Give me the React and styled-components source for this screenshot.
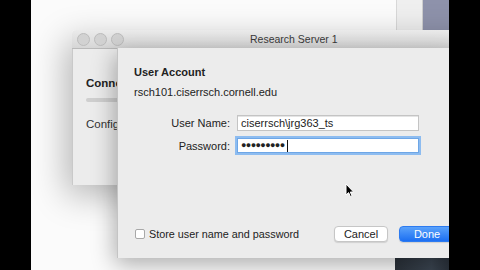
import React from "react";
import styled, { createGlobalStyle } from "styled-components";

const Global = createGlobalStyle`
  html, body { margin: 0; padding: 0; background: #000; }
  body { font-family: "Liberation Sans", Arial, sans-serif; color: #222; }
  #root { width: 480px; height: 270px; overflow: hidden; }
`;

const Screen = styled.div`
  display: flex;
  width: 480px;
  height: 270px;
  background: #000;
`;

const Bar = styled.div`
  width: ${(p) => p.$w}px;
  flex: none;
  background: #000;
`;

const Desktop = styled.div`
  position: relative;
  width: 418px;
  height: 270px;
  overflow: hidden;
  background: #fbfbfb;
`;

const BgWindow = styled.div`
  position: absolute;
  left: 365px;
  top: 0;
  width: 60px;
  height: 270px;
  display: flex;
  flex-direction: column;
  justify-content: space-between;
`;

const BgTop = styled.div`
  display: flex;
  height: 30px;
`;

const BgPane = styled.div`
  width: ${(p) => p.$w}px;
  background: ${(p) => p.$bg};
  border-left: 1px solid ${(p) => p.$line};
`;

const BgBottom = styled.div`
  height: 14px;
  margin-left: -1px;
  background: linear-gradient(90deg, #2b323a, #3a4450 60%, #222830);
`;

const Window = styled.div`
  position: absolute;
  left: 41px;
  top: 30px;
  width: 420px;
  display: flex;
  flex-direction: column;
  box-shadow: -6px 10px 34px rgba(0, 0, 0, 0.28);
  border-radius: 4px 4px 0 0;
`;

const TitleBar = styled.div`
  position: relative;
  height: 18px;
  display: flex;
  align-items: center;
  padding-left: 5px;
  gap: 4px;
  background: linear-gradient(#ebebeb, #d6d6d6);
  border-bottom: 1px solid #b9b9b9;
  border-radius: 4px 4px 0 0;
`;

const Light = styled.span`
  width: 11px;
  height: 11px;
  border-radius: 50%;
  background: #d2d2d2;
  border: 0.5px solid #bcbcbc;
  flex: none;
`;

const Title = styled.div`
  position: absolute;
  left: 178px;
  top: 0;
  height: 18px;
  line-height: 18px;
  font-size: 10.5px;
  color: #3a3a3a;
  white-space: nowrap;
`;

const WinBody = styled.div`
  height: 109px;
  background: #ececec;
  border-left: 1px solid #c9c9c9;
  padding: 27px 0 0 13px;
  display: flex;
  flex-direction: column;
`;

const PaneHead = styled.div`
  font-size: 11.5px;
  font-weight: bold;
  line-height: 14px;
  color: #222;
`;

const Progress = styled.div`
  margin-top: 8px;
  height: 4px;
  width: 80px;
  border-radius: 2px;
  background: #cfcfcf;
`;

const PaneText = styled.div`
  margin-top: 15px;
  font-size: 11.5px;
  line-height: 14px;
  color: #333;
`;

const Sheet = styled.div`
  position: absolute;
  left: 86px;
  top: 48px;
  width: 340px;
  height: 210px;
  box-sizing: border-box;
  background: #ececec;
  border-left: 1px solid #c4c4c4;
  box-shadow: -2px 6px 22px rgba(0, 0, 0, 0.32);
  padding: 17px 0 16px 16px;
  display: flex;
  flex-direction: column;
`;

const Heading = styled.div`
  font-size: 11px;
  font-weight: bold;
  line-height: 14px;
  color: #222;
`;

const Host = styled.div`
  margin-top: 6px;
  font-size: 11px;
  line-height: 14px;
  color: #222;
`;

const Form = styled.div`
  margin-top: 16px;
  display: grid;
  grid-template-columns: 96px 182px;
  column-gap: 7px;
  row-gap: 6px;
  align-items: center;
`;

const Label = styled.div`
  text-align: right;
  font-size: 11px;
  color: #222;
`;

const Field = styled.div`
  height: ${(p) => (p.$focus ? 15 : 16)}px;
  box-sizing: border-box;
  background: #fff;
  border: 1px solid ${(p) => (p.$focus ? "#6ea6e6" : "#c4c4c4")};
  box-shadow: ${(p) => (p.$focus ? "0 0 0 2px #8dbcf0" : "inset 0 1px 0 #e4e4e4")};
  display: flex;
  align-items: center;
  padding-left: 3px;
  font-size: 11px;
  color: #222;
  margin: ${(p) => (p.$focus ? "1px 0" : "0")};
`;

const Dots = styled.span`
  font-size: 9px;
  letter-spacing: -0.6px;
  line-height: 1;
`;

const Caret = styled.span`
  width: 1px;
  height: 12px;
  background: #111;
  margin-left: 2px;
`;

const Spacer = styled.div`
  flex: 1;
`;

const Footer = styled.div`
  display: flex;
  align-items: center;
  height: 16px;
  white-space: nowrap;
`;

const Check = styled.span`
  width: 10px;
  height: 10px;
  box-sizing: border-box;
  background: #fff;
  border: 1px solid #a8a8a8;
  border-radius: 2px;
  margin-left: 1px;
  flex: none;
`;

const CheckLabel = styled.span`
  margin-left: 4px;
  font-size: 10.8px;
  color: #222;
  flex: none;
`;

const Button = styled.div`
  height: 16px;
  box-sizing: border-box;
  border-radius: 4px;
  display: flex;
  align-items: center;
  justify-content: center;
  font-size: 11px;
  width: ${(p) => p.$w}px;
  margin-left: ${(p) => p.$ml}px;
  background: ${(p) => (p.$primary ? "linear-gradient(#5aa2fb, #1c6ff2)" : "#fff")};
  color: ${(p) => (p.$primary ? "#fff" : "#222")};
  border: 1px solid ${(p) => (p.$primary ? "#2d7bf0" : "#c6c6c6")};
  box-shadow: 0 1px 1px rgba(0, 0, 0, 0.12);
  flex: none;
`;

const Cursor = styled.svg`
  position: absolute;
  left: 314px;
  top: 183px;
`;

export default function App() {
  return (
    <>
      <Global />
      <Screen>
        <Bar $w={31} />
        <Desktop>
          <BgWindow>
            <BgTop>
              <BgPane $w={26} $bg="#efefef" $line="#d8d8d8" />
              <BgPane $w={34} $bg="#8e92ab" $line="#cfcfcf" />
            </BgTop>
            <BgBottom />
          </BgWindow>
          <Window>
            <TitleBar>
              <Light />
              <Light />
              <Light />
              <Title>Research Server 1</Title>
            </TitleBar>
            <WinBody>
              <PaneHead>Connecting</PaneHead>
              <Progress />
              <PaneText>Configuring</PaneText>
            </WinBody>
          </Window>
          <Sheet>
            <Heading>User Account</Heading>
            <Host>rsch101.ciserrsch.cornell.edu</Host>
            <Form>
              <Label>User Name:</Label>
              <Field>ciserrsch\jrg363_ts</Field>
              <Label>Password:</Label>
              <Field $focus>
                <Dots>●●●●●●●●●</Dots>
                <Caret />
              </Field>
            </Form>
            <Spacer />
            <Footer>
              <Check />
              <CheckLabel>Store user name and password</CheckLabel>
              <Button $w={54} $ml={35}>Cancel</Button>
              <Button $w={56} $ml={11} $primary>Done</Button>
            </Footer>
          </Sheet>
          <Cursor width="10" height="15" viewBox="0 0 10 15">
            <path d="M1 1 L1 12 L3.6 9.6 L5.4 13.6 L7 12.9 L5.3 9 L8.6 9 Z" fill="#000" stroke="#fff" strokeWidth="1" strokeLinejoin="round" />
          </Cursor>
        </Desktop>
        <Bar $w={31} />
      </Screen>
    </>
  );
}
